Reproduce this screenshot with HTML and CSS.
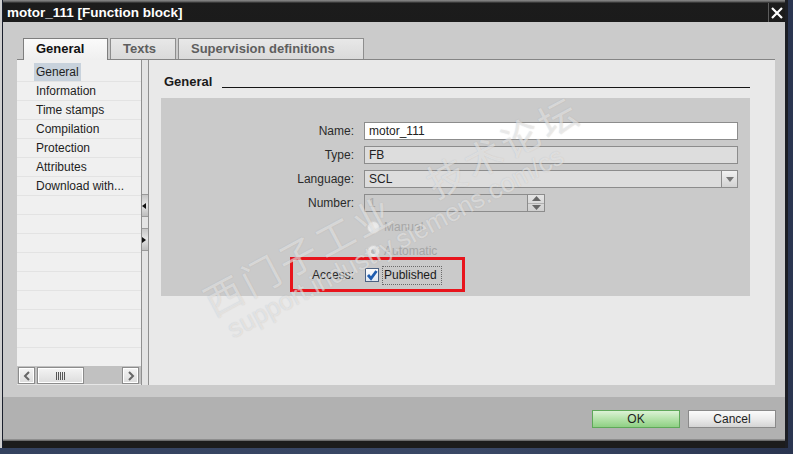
FILE: index.html
```html
<!DOCTYPE html>
<html>
<head>
<meta charset="utf-8">
<title>motor_111 [Function block]</title>
<link rel="stylesheet" href="styles.css">
</head>
<body>
<div class="window">
  <div class="titlebar">
    <span class="title">motor_111 [Function block]</span>
    <div class="close">
      <svg width="12" height="12" viewBox="0 0 12 12"><path d="M1 1 L11 11 M11 1 L1 11" stroke="#fff" stroke-width="2.2" fill="none"/></svg>
    </div>
  </div>
  <div class="body">
    <div class="tabs">
      <div class="tab active t-general">General</div>
      <div class="tab t-texts">Texts</div>
      <div class="tab t-sup">Supervision definitions</div>
    </div>
    <div class="panel">
      <div class="nav">
        <ul class="nav-list">
          <li><span class="sel">General</span></li>
          <li>Information</li>
          <li>Time stamps</li>
          <li>Compilation</li>
          <li>Protection</li>
          <li>Attributes</li>
          <li>Download with...</li>
          <li></li><li></li><li></li><li></li><li></li><li></li><li></li><li></li><li></li>
        </ul>
        <div class="hscroll">
          <div class="sbtn">
            <svg width="8" height="10" viewBox="0 0 8 10"><path d="M6 1 L2 5 L6 9" stroke="#666" stroke-width="2" fill="none"/></svg>
          </div>
          <div class="thumb">
            <svg width="9" height="8" viewBox="0 0 9 8"><path d="M0.5 0 V8 M2.5 0 V8 M4.5 0 V8 M6.5 0 V8 M8.5 0 V8" stroke="#555" stroke-width="1" fill="none"/></svg>
          </div>
          <div class="track"></div>
          <div class="sbtn">
            <svg width="8" height="10" viewBox="0 0 8 10"><path d="M2 1 L6 5 L2 9" stroke="#666" stroke-width="2" fill="none"/></svg>
          </div>
        </div>
      </div>
      <div class="splitter">
        <div class="split-btn left"><svg width="4" height="6" viewBox="0 0 4 6"><path d="M0 3 L4 0 V6 Z" fill="#111"/></svg></div>
        <div class="split-btn right"><svg width="4" height="6" viewBox="0 0 4 6"><path d="M4 3 L0 0 V6 Z" fill="#111"/></svg></div>
      </div>
      <div class="content">
        <div class="section-head">
          <span class="section-title">General</span>
          <div class="rule"></div>
        </div>
        <div class="form">
          <label class="lbl">Name:</label>
          <div class="field white">motor_111</div>

          <label class="lbl">Type:</label>
          <div class="field">FB</div>

          <label class="lbl">Language:</label>
          <div class="field select">
            <span>SCL</span>
            <span class="dd"><svg width="8" height="5" viewBox="0 0 8 5"><path d="M0 0 H8 L4 5 Z" fill="#777"/></svg></span>
          </div>

          <label class="lbl">Number:</label>
          <div class="field number">
            <span class="num">1</span>
            <span class="spin">
              <span class="spin-half"><svg width="9" height="5" viewBox="0 0 9 5"><path d="M0 5 L4.5 0 L9 5 Z" fill="#666"/></svg></span>
              <span class="spin-half"><svg width="9" height="5" viewBox="0 0 9 5"><path d="M0 0 L4.5 5 L9 0 Z" fill="#666"/></svg></span>
            </span>
          </div>

          <span class="lbl"></span>
          <div class="opt"><span class="radio"></span><span class="dis">Manual</span></div>

          <span class="lbl"></span>
          <div class="opt"><span class="radio checked"></span><span class="dis">Automatic</span></div>

          <label class="lbl">Access:</label>
          <div class="opt access">
            <span class="check"><svg width="12" height="12" viewBox="0 0 12 12"><path d="M2 6 L5 9.5 L10.5 2" stroke="#1f5db0" stroke-width="2.8" fill="none"/></svg></span>
            <span class="focus">Published</span>
          </div>
        </div>
      </div>
    </div>
  </div>
  <div class="buttonbar">
    <button class="btn ok">OK</button>
    <button class="btn">Cancel</button>
  </div>
  <div class="bottom-edge"></div>
</div>

<div class="annot"></div>

<div class="wm-cn">西门子工业　技术论坛</div>
<div class="wm-url">support.industry.siemens.com/cs</div>
</body>
</html>
```

FILE: styles.css
```css
* { box-sizing: border-box; margin: 0; padding: 0; }
html, body { width: 793px; height: 454px; overflow: hidden; }
body {
  position: relative;
  background: linear-gradient(90deg, #34425f, #3a4866 60%, #2a3550);
  font-family: "Liberation Sans", Arial, sans-serif;
  font-size: 12px;
  color: #222;
}

.window {
  width: 786px;
  height: 448px;
  margin-left: 2px;
  border-left: 1px solid #1a1f2c;
  border-right: 3px solid #1c1e24;
  background: #cbcbcb;
  display: flex;
  flex-direction: column;
  box-shadow: -2px 0 0 #cfcfcf;
}

/* title bar */
.titlebar {
  height: 22px;
  flex: none;
  background: linear-gradient(#8c8c8c 0, #555 2px, #1c1c1c 3px, #1b1b1b 100%);
  display: flex;
  align-items: center;
  justify-content: space-between;
  padding-left: 4px;
}
.title {
  color: #fff;
  font-weight: bold;
  font-size: 13.5px;
  padding-top: 2px;
}
.close {
  width: 17px;
  height: 19px;
  margin-top: 3px;
  border-left: 1px solid #5c5c5c;
  display: flex;
  align-items: center;
  justify-content: center;
}

/* body */
.body { padding: 16px 10px 0 14px; flex: none; }

.tabs {
  display: flex;
  height: 21px;
  padding-left: 6px;
  gap: 2px;
}
.tab {
  height: 21px;
  padding-left: 12px;
  border: 1px solid #8e8e8e;
  border-bottom: none;
  background: linear-gradient(#e8e8e8, #dadada);
  color: #5e5e5e;
  font-weight: bold;
  font-size: 13px;
  line-height: 20px;
}
.tab.active {
  height: 22px;
  margin-bottom: -1px;
  background: linear-gradient(#fafafa, #efefef);
  color: #111;
  position: relative;
  z-index: 1;
  border-color: #7e7e7e;
}
.t-general { width: 85px; }
.t-texts { width: 66px; }
.t-sup { width: 186px; }

.panel {
  height: 326px;
  display: flex;
  border-top: 1px solid #858585;
}

/* nav */
.nav {
  width: 124px;
  flex: none;
  background: #f0f0f0;
  display: flex;
  flex-direction: column;
  border-bottom: 1px solid #e6e6e6;
}
.nav-list {
  list-style: none;
  flex: 1;
  overflow: hidden;
  padding-top: 3px;
}
.nav-list li {
  height: 19px;
  border-bottom: 1px solid #e3e3e3;
  padding-left: 19px;
  line-height: 18px;
  color: #1e1e1e;
  white-space: nowrap;
}
.sel {
  display: inline-block;
  background: #c8d2dc;
  padding: 0 2px;
  margin-left: -2px;
}
.hscroll {
  height: 18px;
  flex: none;
  background: #c1c1c1;
  display: flex;
  padding: 1px 2px 0 1px;
  gap: 2px;
}
.sbtn, .thumb {
  height: 17px;
  border: 1px solid #8c8c8c;
  box-shadow: inset 0 0 0 1px #fff;
  background: linear-gradient(#f4f4f4, #dcdcdc);
  display: flex;
  align-items: center;
  justify-content: center;
}
.sbtn { width: 17px; }
.thumb { width: 47px; }
.track { flex: 1; }

/* splitter */
.splitter {
  width: 8px;
  flex: none;
  background: #e4e4e4;
  border-left: 1px solid #909090;
  border-right: 1px solid #909090;
  padding-top: 134px;
}
.split-btn {
  height: 23px;
  margin-bottom: 11px;
  background: linear-gradient(#c6c6c6, #e6e6e6 45%, #dcdcdc 60%, #bdbdbd);
  border-top: 1px solid #9a9a9a;
  border-bottom: 1px solid #9a9a9a;
  display: flex;
  align-items: center;
}

/* content */
.content {
  flex: 1;
  background: #e9e9e9;
  padding: 14px 25px 0 12px;
}
.section-head {
  display: flex;
  align-items: flex-end;
  height: 15px;
}
.section-title {
  font-weight: bold;
  font-size: 13px;
  line-height: 15px;
  padding-left: 3px;
  color: #1a1a1a;
}
.rule {
  flex: 1;
  margin-left: 10px;
  border-bottom: 1px solid #161616;
  margin-bottom: 1px;
}
.form {
  margin-top: 9px;
  height: 198px;
  background: #cacaca;
  padding: 24px 12px 0 0;
  display: grid;
  grid-template-columns: 193px 1fr;
  grid-auto-rows: 18px;
  column-gap: 10px;
  row-gap: 6px;
}
.lbl {
  text-align: right;
  line-height: 18px;
  color: #2a2a2a;
}
.field {
  height: 18px;
  border: 1px solid #8c8c8c;
  background: #dddddd;
  padding-left: 4px;
  line-height: 16px;
  color: #222;
  display: flex;
  align-items: center;
}
.field.white { background: #fff; }
.field.select { justify-content: space-between; }
.dd {
  width: 16px;
  height: 16px;
  border-left: 1px solid #8c8c8c;
  background: linear-gradient(#f2f2f2, #d2d2d2);
  display: flex;
  align-items: center;
  justify-content: center;
}
.field.number {
  width: 181px;
  background: #cacaca;
  justify-content: space-between;
}
.num { color: #a9a9a9; }
.spin {
  width: 17px;
  height: 16px;
  border-left: 1px solid #8c8c8c;
  display: flex;
  flex-direction: column;
  background: linear-gradient(#e4e4e4, #cfcfcf);
}
.spin-half {
  flex: 1;
  display: flex;
  align-items: center;
  justify-content: center;
}
.spin-half + .spin-half { border-top: 1px solid #b0b0b0; }

.opt {
  display: flex;
  align-items: center;
  height: 18px;
}
.radio {
  width: 13px;
  height: 13px;
  border-radius: 50%;
  margin-left: 3px;
  margin-right: 4px;
  border: 1px solid #d4d4d4;
  background: radial-gradient(circle, #f0f0f0, #e2e2e2);
  position: relative;
}
.radio.checked::after {
  content: "";
  position: absolute;
  left: 3px;
  top: 3px;
  width: 5px;
  height: 5px;
  border-radius: 50%;
  background: #b8b8b8;
}
.dis { color: #a6a6a6; }

.check {
  width: 14px;
  height: 14px;
  margin-left: 1px;
  margin-right: 3px;
  border: 1px solid #4c6282;
  background: linear-gradient(#fdfdfd, #dfe7f2);
  display: flex;
  align-items: center;
  justify-content: center;
}
.focus {
  border: 1px dotted #6a6a6a;
  padding: 0 4px 0 1px;
  line-height: 17px;
  color: #1a1a1a;
}

/* buttons */
.buttonbar {
  margin-top: 12px;
  height: 42px;
  flex: none;
  background: #b1b1b1;
  display: flex;
  justify-content: flex-end;
  padding: 13px 9px 0 0;
  gap: 8px;
}
.btn {
  width: 88px;
  height: 18px;
  font-family: "Liberation Sans", Arial, sans-serif;
  font-size: 12px;
  color: #1e1e1e;
  border: 1px solid #8a8a8a;
  background: linear-gradient(#fbfbfb, #ebebeb 50%, #d4d4d4);
  line-height: 16px;
}
.btn.ok {
  border-color: #5fa85a;
  background: linear-gradient(#dcf2d6, #b4e2aa 50%, #8fd084);
}
.bottom-edge {
  height: 9px;
  flex: none;
  background: linear-gradient(#8e8e8e 0 1px, #6c6c6c 1px 2px, #1c1c1c 2px);
}

/* annotation */
.annot {
  position: absolute;
  left: 290px;
  top: 257px;
  width: 175px;
  height: 35px;
  border: 3px solid #e8141c;
}

/* watermark */
.wm-cn, .wm-url {
  position: absolute;
  white-space: nowrap;
  transform-origin: left bottom;
  transform: rotate(-28deg);
  color: rgba(255, 255, 255, 0.5);
  text-shadow: 0 0 1px rgba(120, 120, 120, 0.35);
  pointer-events: none;
}
.wm-cn {
  left: 216px;
  top: 280px;
  font-family: "Noto Sans CJK SC", sans-serif;
  font-size: 38px;
  line-height: 42px;
  letter-spacing: 4px;
}
.wm-url {
  left: 236px;
  top: 314px;
  font-family: "Liberation Sans", Arial, sans-serif;
  font-size: 26px;
  line-height: 30px;
}
```
